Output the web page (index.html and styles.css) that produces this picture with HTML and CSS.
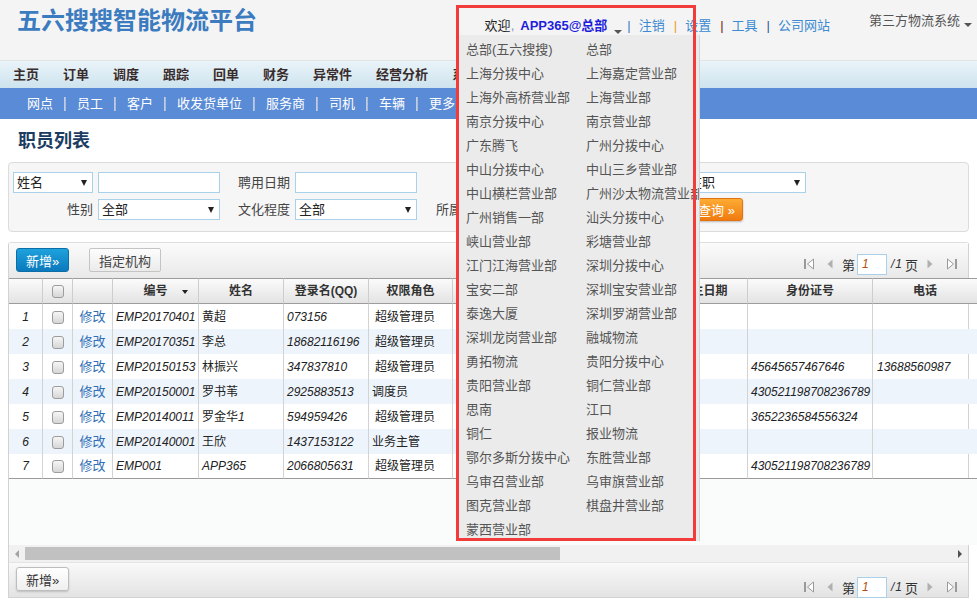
FILE: index.html
```html
<!DOCTYPE html>
<html lang="zh-CN">
<head>
<meta charset="utf-8">
<title>职员列表</title>
<link rel="stylesheet" href="styles.css">
</head>
<body>
<div class="page">
  <header class="top">
    <h1 class="logo">五六搜搜智能物流平台</h1>
    <div class="userbar">
      <span class="welcome">欢迎<span class="comma">,</span></span>
      <b class="user">APP365@总部</b><span class="caret"></span>
      <span class="sep s1">|</span><a class="lnk">注销</a>
      <span class="sep s2">|</span><a class="lnk">设置</a>
      <span class="sep s3">|</span><a class="lnk">工具</a>
      <span class="sep s4">|</span><a class="lnk">公司网站</a>
    </div>
    <div class="sys">第三方物流系统<span class="caret sc"></span></div>
  </header>

  <nav class="mainnav">
    <a>主页</a><a>订单</a><a>调度</a><a>跟踪</a><a>回单</a><a>财务</a><a>异常件</a><a>经营分析</a><a>系统</a>
  </nav>
  <nav class="subnav">
    <a>网点</a><i class="bar"></i><a>员工</a><i class="bar"></i><a>客户</a><i class="bar"></i><a>收发货单位</a><i class="bar"></i><a>服务商</a><i class="bar"></i><a>司机</a><i class="bar"></i><a>车辆</a><i class="bar"></i><a>更多</a>
  </nav>

  <h2 class="ptitle">职员列表</h2>

  <div class="filter">
    <div class="sel"><span>姓名</span><i class="tri"></i></div>
    <div class="inp"></div>
    <label class="lbl">聘用日期</label>
    <div class="inp"></div>
    <label class="lbl">工号</label>
    <div class="inp"></div>
    <label class="lbl">状态</label>
    <div class="sel"><span>在职</span><i class="tri"></i></div>

    <label class="lbl">性别</label>
    <div class="sel"><span>全部</span><i class="tri"></i></div>
    <label class="lbl">文化程度</label>
    <div class="sel"><span>全部</span><i class="tri"></i></div>
    <label class="lbl">所属部门</label>
    <div class="sel"><span>全部</span><i class="tri"></i></div>
    <span></span>
    <div class="btncell"><button class="btn-orange">查询 »</button></div>
  </div>

  <div class="grid">
    <div class="gtool">
      <button class="btn-blue">新增»</button>
      <button class="btn-grey">指定机构</button>
      <div class="pager">
        <svg class="pg-first" width="10" height="12" viewBox="0 0 10 12"><rect x="0" y="1" width="2" height="10" fill="#9a9a9a"/><path d="M9.5 1 L3.5 6 L9.5 11 Z" fill="#fff" stroke="#9a9a9a"/></svg>
        <svg class="pg-prev" width="6" height="10" viewBox="0 0 6 10"><path d="M5.5 0.5 L0.5 5 L5.5 9.5 Z" fill="#b0b0b0"/></svg>
        <span class="pg-t">第</span><span class="pg-in"><i>1</i></span><span class="pg-of"><i>/1</i></span><span class="pg-ye">页</span>
        <svg class="pg-next" width="6" height="10" viewBox="0 0 6 10"><path d="M0.5 0.5 L5.5 5 L0.5 9.5 Z" fill="#b0b0b0"/></svg>
        <svg class="pg-last" width="12" height="12" viewBox="0 0 12 12"><path d="M0.5 1 L6.5 6 L0.5 11 Z" fill="#fff" stroke="#9a9a9a"/><rect x="8" y="1" width="2" height="10" fill="#9a9a9a"/></svg>
      </div>
    </div>

    <div class="gbody">
      <table class="tbl">
        <colgroup>
          <col class="c-rn"><col class="c-ck"><col class="c-act"><col class="c-no"><col class="c-nm"><col class="c-qq"><col class="c-role"><col class="c-dept"><col class="c-sex"><col class="c-edu"><col class="c-birth"><col class="c-id"><col class="c-tel"><col class="c-pos">
        </colgroup>
        <thead>
          <tr>
            <th></th><th><span class="cb"></span></th><th></th><th class="sort">编号<i class="sortcaret"></i></th><th>姓名</th><th>登录名(QQ)</th><th>权限角色</th><th>所属部门</th><th>性别</th><th>文化程度</th><th>出生日期</th><th>身份证号</th><th>电话</th><th>职务</th>
          </tr>
        </thead>
        <tbody>
          <tr><td class="rn"><i>1</i></td><td class="ck"><span class="cb"></span></td><td class="act"><a>修改</a></td><td><i>EMP20170401</i></td><td>黄超</td><td><i>073156</i></td><td class="sp">超级管理员</td><td></td><td></td><td></td><td></td><td></td><td></td><td></td></tr>
          <tr class="alt"><td class="rn"><i>2</i></td><td class="ck"><span class="cb"></span></td><td class="act"><a>修改</a></td><td><i>EMP20170351</i></td><td>李总</td><td><i>18682116196</i></td><td class="sp">超级管理员</td><td></td><td></td><td></td><td></td><td></td><td></td><td></td></tr>
          <tr><td class="rn"><i>3</i></td><td class="ck"><span class="cb"></span></td><td class="act"><a>修改</a></td><td><i>EMP20150153</i></td><td>林振兴</td><td><i>347837810</i></td><td class="sp">超级管理员</td><td></td><td></td><td></td><td></td><td><i>45645657467646</i></td><td class="tel"><i>13688560987</i></td><td></td></tr>
          <tr class="alt"><td class="rn"><i>4</i></td><td class="ck"><span class="cb"></span></td><td class="act"><a>修改</a></td><td><i>EMP20150001</i></td><td>罗书苇</td><td><i>2925883513</i></td><td>调度员</td><td></td><td></td><td></td><td></td><td><i>430521198708236789</i></td><td></td><td></td></tr>
          <tr><td class="rn"><i>5</i></td><td class="ck"><span class="cb"></span></td><td class="act"><a>修改</a></td><td><i>EMP20140011</i></td><td>罗金华<i>1</i></td><td><i>594959426</i></td><td class="sp">超级管理员</td><td></td><td></td><td></td><td></td><td><i>3652236584556324</i></td><td></td><td></td></tr>
          <tr class="alt"><td class="rn"><i>6</i></td><td class="ck"><span class="cb"></span></td><td class="act"><a>修改</a></td><td><i>EMP20140001</i></td><td>王欣</td><td><i>1437153122</i></td><td>业务主管</td><td></td><td></td><td></td><td></td><td></td><td></td><td></td></tr>
          <tr><td class="rn"><i>7</i></td><td class="ck"><span class="cb"></span></td><td class="act"><a>修改</a></td><td><i>EMP001</i></td><td><i>APP365</i></td><td><i>2066805631</i></td><td class="sp">超级管理员</td><td></td><td></td><td></td><td></td><td><i>430521198708236789</i></td><td></td><td></td></tr>
        </tbody>
      </table>
      <div class="gempty"></div>
    </div>

    <div class="hscroll">
      <span class="sarrow"><svg width="4" height="8" viewBox="0 0 4 8"><path d="M4 0 L0 4 L4 8 Z" fill="#a3a3a3"/></svg></span>
      <span class="thumb"></span>
      <span class="sfill"></span>
      <span class="sarrow"><svg width="4" height="8" viewBox="0 0 4 8"><path d="M0 0 L4 4 L0 8 Z" fill="#505050"/></svg></span>
    </div>

    <div class="gfoot">
      <button class="btn-white">新增»</button>
      <div class="pager">
        <svg class="pg-first" width="10" height="12" viewBox="0 0 10 12"><rect x="0" y="1" width="2" height="10" fill="#9a9a9a"/><path d="M9.5 1 L3.5 6 L9.5 11 Z" fill="#fff" stroke="#9a9a9a"/></svg>
        <svg class="pg-prev" width="6" height="10" viewBox="0 0 6 10"><path d="M5.5 0.5 L0.5 5 L5.5 9.5 Z" fill="#b0b0b0"/></svg>
        <span class="pg-t">第</span><span class="pg-in"><i>1</i></span><span class="pg-of"><i>/1</i></span><span class="pg-ye">页</span>
        <svg class="pg-next" width="6" height="10" viewBox="0 0 6 10"><path d="M0.5 0.5 L5.5 5 L0.5 9.5 Z" fill="#b0b0b0"/></svg>
        <svg class="pg-last" width="12" height="12" viewBox="0 0 12 12"><path d="M0.5 1 L6.5 6 L0.5 11 Z" fill="#fff" stroke="#9a9a9a"/><rect x="8" y="1" width="2" height="10" fill="#9a9a9a"/></svg>
      </div>
    </div>
  </div>

  <div class="menu">
    <span>总部(五六搜搜)</span><span>总部</span>
    <span>上海分拨中心</span><span>上海嘉定营业部</span>
    <span>上海外高桥营业部</span><span>上海营业部</span>
    <span>南京分拨中心</span><span>南京营业部</span>
    <span>广东腾飞</span><span>广州分拨中心</span>
    <span>中山分拨中心</span><span>中山三乡营业部</span>
    <span>中山横栏营业部</span><span>广州沙太物流营业部</span>
    <span>广州销售一部</span><span>汕头分拨中心</span>
    <span>峡山营业部</span><span>彩塘营业部</span>
    <span>江门江海营业部</span><span>深圳分拨中心</span>
    <span>宝安二部</span><span>深圳宝安营业部</span>
    <span>泰逸大厦</span><span>深圳罗湖营业部</span>
    <span>深圳龙岗营业部</span><span>融城物流</span>
    <span>勇拓物流</span><span>贵阳分拨中心</span>
    <span>贵阳营业部</span><span>铜仁营业部</span>
    <span>思南</span><span>江口</span>
    <span>铜仁</span><span>报业物流</span>
    <span>鄂尔多斯分拨中心</span><span>东胜营业部</span>
    <span>乌审召营业部</span><span>乌审旗营业部</span>
    <span>图克营业部</span><span>棋盘井营业部</span>
    <span>蒙西营业部</span>
  </div>
  <div class="redframe"></div>
</div>
</body>
</html>
```
FILE: styles.css
```css
* { box-sizing: border-box; }
html, body { margin: 0; padding: 0; }
body {
  font-family: "Liberation Sans", "Noto Sans CJK SC", sans-serif;
  font-size: 13px;
  color: #333;
  background: #fff;
}
.page { position: relative; width: 977px; height: 606px; overflow: hidden; }
a { text-decoration: none; cursor: pointer; }
i { font-style: italic; }

/* ---------- header ---------- */
.top {
  display: flex;
  align-items: flex-start;
  height: 60px;
  background: #f4f4f4;
  padding-right: 5px;
}
.logo {
  margin: 0;
  padding: 6px 0 0 17px;
  font-size: 24px;
  line-height: 30px;
  font-weight: bold;
  color: #3b7bbf;
  white-space: nowrap;
}
.userbar {
  display: flex;
  align-items: flex-start;
  margin-left: auto;
  padding-top: 18px;
  line-height: 16px;
  white-space: nowrap;
}
.welcome { color: #222; }
.comma { color: #8090c0; }
.user { margin-left: 6px; color: #1e1edc; font-weight: bold; }
.caret {
  width: 0; height: 0;
  margin: 12px 0 0 7px;
  border-left: 4px solid transparent;
  border-right: 4px solid transparent;
  border-top: 4px solid #555;
}
.sep { margin: 0 8px 0 9px; }
.s1 { margin-left: 5px; color: #3c7cc4; }
.s2 { color: #e8a020; }
.s3 { color: #6a2020; }
.s4 { color: #2c5a9a; }
.lnk { color: #3b8ad2; }
.sys {
  display: flex;
  align-items: flex-start;
  margin-left: 39px;
  padding-top: 13px;
  line-height: 16px;
  color: #555;
  white-space: nowrap;
}
.sys .sc { margin: 10px 0 0 4px; }

/* ---------- navs ---------- */
.mainnav {
  display: flex;
  height: 28px;
  padding-left: 1px;
  background: linear-gradient(#eaf4f9, #cde3ee);
  border-top: 1px solid #e1e5e8;
  white-space: nowrap;
}
.mainnav a {
  padding: 0 12px;
  line-height: 27px;
  font-weight: bold;
  color: #3a2c2c;
}
.subnav {
  display: flex;
  align-items: center;
  height: 31px;
  padding: 1px 0 0 16px;
  background: #5a8bd6;
  white-space: nowrap;
}
.subnav a { padding: 0 11px; color: #fff; line-height: 30px; }
.subnav .bar { width: 2px; height: 14px; background: linear-gradient(90deg, #c9d3e3, #9fb5d9); }

/* ---------- title ---------- */
.ptitle {
  margin: 0;
  height: 43px;
  padding: 10px 0 0 18px;
  font-size: 18px;
  line-height: 24px;
  font-weight: 600;
  color: #1c3d61;
}

/* ---------- filter ---------- */
.filter {
  margin: 0 8px;
  height: 70px;
  padding: 9px 4px;
  background: #f6f6f6;
  border: 1px solid #dcdcdc;
  border-radius: 4px;
  display: grid;
  grid-template-columns: 80px 122px 65px 122px 66px 122px 60px 121px;
  grid-template-rows: 21px 21px;
  column-gap: 5px;
  row-gap: 6px;
  align-content: start;
}
.lbl { text-align: right; line-height: 21px; color: #444; white-space: nowrap; }
.inp, .sel {
  position: relative;
  height: 21px;
  background: #fff;
  border: 1px solid #a9d1ea;
}
.sel span { display: block; padding-left: 3px; line-height: 19px; color: #222; }
.tri {
  position: absolute;
  right: 5px; top: 7px;
  border-left: 3px solid transparent;
  border-right: 3px solid transparent;
  border-top: 6px solid #222;
}
.btncell { display: flex; }
.btn-orange {
  margin: -1px 0 0 5px;
  width: 53px; height: 23px;
  padding: 0;
  font: 13px "Liberation Sans", "Noto Sans CJK SC", sans-serif;
  color: #fff;
  background: linear-gradient(#fdab33, #f07b10);
  border: 1px solid #e27212;
  border-radius: 3px;
  box-shadow: 0 1px 2px rgba(0,0,0,.25);
}

/* ---------- grid ---------- */
.grid {
  margin: 10px 8px 0;
  border: 1px solid #d2d2d2;
  border-top-color: #dedede;
  border-radius: 3px 3px 0 0;
}
.gtool {
  display: flex;
  align-items: flex-start;
  height: 35px;
  padding: 5px 8px 0 7px;
  background: linear-gradient(#fbfbfb, #e9e9e9);
}
button { font: 13px "Liberation Sans", "Noto Sans CJK SC", sans-serif; padding: 0; cursor: pointer; }
.btn-blue {
  width: 53px; height: 24px;
  color: #fff;
  background: linear-gradient(#1ea2dd, #0a79bd);
  border: 1px solid #0b6ea6;
  border-radius: 3px;
}
.btn-grey {
  margin-left: 20px;
  width: 72px; height: 24px;
  color: #444;
  background: linear-gradient(#fdfdfd, #ebebeb);
  border: 1px solid #c4c4c4;
  border-radius: 2px;
}
.btn-white {
  width: 53px; height: 24px;
  color: #333;
  background: linear-gradient(#ffffff, #efefef);
  border: 1px solid #bdbdbd;
  border-radius: 3px;
  box-shadow: 0 1px 2px rgba(0,0,0,.18);
}
.pager {
  display: flex;
  align-items: center;
  margin-left: auto;
  height: 22px;
  margin-top: 5px;
  margin-right: 1px;
  white-space: nowrap;
  color: #333;
}
.pg-prev { margin-left: 13px; }
.pg-t { margin-left: 9px; }
.pg-in {
  margin-left: 2px;
  width: 30px; height: 21px;
  border: 1px solid #a9d1ea;
  background: #fff;
  padding-left: 4px;
  line-height: 19px;
  font-size: 12px;
  color: #b05010;
}
.pg-of { margin-left: 4px; font-size: 12px; letter-spacing: 1px; }
.pg-ye { margin-left: 2px; }
.pg-next { margin-left: 9px; }
.pg-last { margin-left: 14px; }

.gbody { margin-right: -9px; overflow: hidden; }
.tbl {
  table-layout: fixed;
  border-collapse: separate;
  border-spacing: 0;
  width: 1050px;
}
.c-rn { width: 34px; }
.c-ck { width: 30px; }
.c-act { width: 40px; }
.c-no { width: 86px; }
.c-nm { width: 85px; }
.c-qq { width: 85px; }
.c-role { width: 84px; }
.c-dept { width: 80px; }
.c-sex { width: 60px; }
.c-edu { width: 67px; }
.c-birth { width: 88px; }
.c-id { width: 125px; }
.c-tel { width: 105px; }
.c-pos { width: 81px; }
.tbl th {
  position: relative;
  padding: 0;
  height: 26px;
  line-height: 16px;
  font-size: 12px;
  font-weight: bold;
  color: #333;
  text-align: center;
  vertical-align: middle;
  white-space: nowrap;
  overflow: hidden;
  background: linear-gradient(#fbfbfb, #e3e3e3);
  border-top: 1px solid #9c9c9c;
  border-bottom: 1px solid #9c9c9c;
  border-right: 1px solid #cdcdcd;
}
.sortcaret {
  position: absolute;
  right: 10px; top: 11px;
  border-left: 3px solid transparent;
  border-right: 3px solid transparent;
  border-top: 4px solid #222;
}
.tbl td {
  padding: 0 2px 0 3px;
  height: 25px;
  line-height: 16px;
  font-size: 12px;
  color: #222;
  vertical-align: middle;
  white-space: nowrap;
  overflow: hidden;
  border-right: 1px solid #d3d3d3;
}
.tbl tbody tr:last-child td { border-bottom: 1px solid #9a9a9a; }
.tbl tr.alt td { background: #edf4fc; }
.tbl td.rn { text-align: center; padding: 0; }
.tbl td.ck { text-align: center; padding: 0; }
.tbl td.act { text-align: center; padding: 0; }
.tbl td.sp { padding-left: 6px; }
.tbl td.tel { padding-left: 4px; }
.act a { color: #2f6eb5; font-size: 13px; }
.cb {
  display: inline-block;
  vertical-align: middle;
  width: 12px; height: 13px;
  border: 1px solid #9c9c9c;
  border-radius: 3px;
  background: linear-gradient(#f6f6f6, #d6d6d6);
}
.gempty { height: 66px; background: #fafbfb; }

.hscroll {
  display: flex;
  height: 17px;
  background: #f1f1f1;
}
.sarrow { width: 16px; display: flex; align-items: center; justify-content: center; }
.thumb { width: 535px; height: 13px; margin-top: 2px; background: #c1c1c1; }
.sfill { flex: 1; }

.gfoot {
  display: flex;
  align-items: flex-start;
  height: 35px;
  padding: 4px 8px 0 7px;
  border-top: 1px solid #e4e4e4;
  background: linear-gradient(#f9f9f9, #e3e3e3);
}
.gfoot .pager { margin-top: 9px; }

/* ---------- dropdown overlay ---------- */
.menu {
  position: absolute;
  left: 459px; top: 35px;
  width: 241px; height: 506px;
  padding: 3px 0 0 7px;
  background: #ebebeb;
  border-right: 1px solid #d4d4d4;
  display: grid;
  grid-template-columns: 120px 120px;
  grid-auto-rows: 24px;
  overflow: hidden;
  font-size: 13px;
  line-height: 24px;
  color: #555;
  z-index: 5;
}
.menu span { white-space: nowrap; }
.redframe {
  position: absolute;
  left: 456px; top: 5px;
  width: 240px; height: 536px;
  border: 3px solid #f23b3b;
  z-index: 6;
}
```
